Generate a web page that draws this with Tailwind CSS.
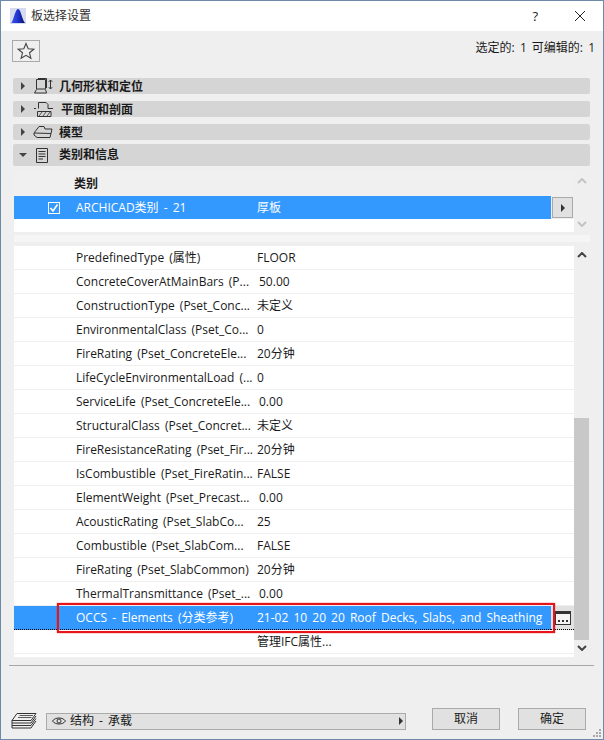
<!DOCTYPE html>
<html lang="en">
<head>
<meta charset="UTF-8">
<title>板选择设置</title>
<script src="https://cdn.jsdelivr.net/npm/@tailwindcss/browser@4"></script>
</head>
<body class="bg-[#efefef] font-['Open_Sans','Noto_Sans_CJK_SC',sans-serif] text-[12px] leading-[16px] text-[#1a1a1a] [word-spacing:2px]">
<div class="w-[604px] h-[740px] relative flex flex-col border border-[#6d8ba8] overflow-hidden">

  <!-- title bar -->
  <div class="h-[30px] bg-white flex items-center pl-[9px] shrink-0">
    <svg width="16" height="16" viewBox="0 0 16 16" class="mr-[5px]">
      <defs><linearGradient id="logo" x1="0" y1="0" x2="1" y2="0"><stop offset="0" stop-color="#3a56f0"/><stop offset=".6" stop-color="#1a2cc0"/><stop offset="1" stop-color="#0a1250"/></linearGradient></defs>
      <rect width="16" height="16" fill="#d5dcf2"/><path d="M1 15C3 15 5 1 8 1C11 1 12 12 15 15Z" fill="url(#logo)"/>
    </svg>
    <span class="text-[#333]">板选择设置</span>
    <span class="ml-auto mr-[36px] text-[13px]">?</span>
    <svg width="12" height="12" viewBox="0 0 12 12" class="mr-[17px]"><path d="M1 1L11 11M11 1L1 11" stroke="#222" stroke-width="1" fill="none"/></svg>
  </div>

  <!-- star + selection count -->
  <div class="h-[30px] mt-[9px] ml-[11px] mr-[8px] flex items-start shrink-0">
    <div class="w-[28px] h-[22px] border border-[#aaa] flex items-center justify-center">
      <svg width="18" height="18" viewBox="0 0 18 18"><path d="M9 1.5L11.2 6.8L16.8 7.2L12.5 10.8L13.9 16.3L9 13.3L4.1 16.3L5.5 10.8L1.2 7.2L6.8 6.8Z" fill="none" stroke="#444" stroke-width="1.1"/></svg>
    </div>
    <span class="ml-auto">选定的: 1 可编辑的: 1</span>
  </div>

  <!-- sections -->
  <div class="ml-[12px] w-[577px] mt-[8px] flex flex-col font-bold shrink-0">
    <div class="h-[16px] bg-[#d5d5d5] rounded-[2px] flex items-center pl-[8px]">
      <span class="w-0 h-0 border-y-[4px] border-y-transparent border-l-[4px] border-l-[#444]"></span>
      <svg width="20" height="16" viewBox="0 0 20 16" class="ml-[9px] mr-[5px]" fill="none" stroke="#333"><path d="M2.5 1.5H11.5V11H2.5Z M4 .5H12.5V10"/><path d="M2.5 11.5L.5 15H12.5L11.5 11.5"/><path d="M16.5 2V11M14.8 3.8L16.5 2L18.2 3.8M14.8 9.2L16.5 11L18.2 9.2"/></svg>
      <span class="mt-[2px]">几何形状和定位</span>
    </div>
    <div class="h-[16px] mt-[7px] bg-[#d5d5d5] rounded-[2px] flex items-center pl-[8px]">
      <span class="w-0 h-0 border-y-[4px] border-y-transparent border-l-[4px] border-l-[#444]"></span>
      <svg width="20" height="16" viewBox="0 0 20 16" class="ml-[9px] mr-[7px]" fill="none" stroke="#333"><path d="M0 7.5H2M4.5 7.5V1.5H12L14 3.5V7.5H19"/><path d="M3.5 10.5H17V15.5H3.5Z"/><path d="M5 15L8 11M9 15L12 11M13 15L16 11" stroke-width=".8"/></svg>
      <span class="mt-[2px]">平面图和剖面</span>
    </div>
    <div class="h-[16px] mt-[7px] bg-[#d5d5d5] rounded-[2px] flex items-center pl-[8px]">
      <span class="w-0 h-0 border-y-[4px] border-y-transparent border-l-[4px] border-l-[#444]"></span>
      <svg width="20" height="14" viewBox="0 0 20 14" class="ml-[8px] mr-[6px]" fill="none" stroke="#333"><path d="M1 8L6 1.5H11L12 4H19L18 8.5L1 8Z"/><path d="M1 8V10L4 12.5H17L18 8.5"/></svg>
      <span class="mt-[2px]">模型</span>
    </div>
    <div class="h-[22px] mt-[4px] bg-[#d5d5d5] rounded-[2px] flex items-center pl-[6px]">
      <span class="w-0 h-0 border-x-[4px] border-x-transparent border-t-[4px] border-t-[#444]"></span>
      <svg width="12" height="15" viewBox="0 0 12 15" class="ml-[9px] mr-[11px]" fill="none" stroke="#333"><path d="M.5.5H11.5V14.5H.5Z M2.5 3.5H9.5M2.5 6H9.5M2.5 8.5H9.5M2.5 11H7"/></svg>
      <span>类别和信息</span>
    </div>
  </div>

  <!-- classification table -->
  <div class="ml-[13px] mt-[6px] w-[576px] flex h-[60px] shrink-0">
    <div class="w-[560px] flex flex-col">
      <div class="h-[24px] bg-[#f0f0f0] pl-[60px] pt-[4px] font-bold">类别</div>
      <div class="flex h-[23px]">
        <div class="w-[537px] bg-[#3399ff] text-white flex items-center">
          <span class="ml-[34px] w-[12px] h-[12px] border border-white flex items-center justify-center">
            <svg width="10" height="10" viewBox="0 0 10 10" fill="none" stroke="white" stroke-width="1.6"><path d="M1.5 5L4 8L8.5 1.5"/></svg>
          </span>
          <span class="ml-[16px] w-[181px]">ARCHICAD类别 - 21</span>
          <span>厚板</span>
        </div>
        <div class="ml-[1px] w-[21px] h-[21px] mt-[1px] border border-[#aaa] bg-[#e1e1e1] flex items-center justify-center">
          <span class="w-0 h-0 border-y-[4px] border-y-transparent border-l-[4px] border-l-[#333]"></span>
        </div>
      </div>
      <div class="h-[13px] bg-white"></div>
    </div>
    <div class="w-[16px] flex flex-col items-center justify-between pt-[6px] pb-[5px]">
      <svg width="10" height="6" viewBox="0 0 10 6" fill="none" stroke="#c4c4c4" stroke-width="2"><path d="M1 5L5 1L9 5"/></svg>
      <svg width="10" height="6" viewBox="0 0 10 6" fill="none" stroke="#c4c4c4" stroke-width="2"><path d="M1 1L5 5L9 1"/></svg>
    </div>
  </div>
  <div class="ml-[13px] mt-[3px] w-[576px] h-[7px] bg-[#f5f5f5] shrink-0"></div>

  <!-- property list -->
  <div class="ml-[13px] mt-[4px] w-[576px] h-[411px] flex relative shrink-0 whitespace-nowrap">
    <div class="w-[560px] bg-white flex flex-col">
      <div class="h-[24px] flex items-center border-b border-[#efefef] pl-[62px]"><span class="w-[181px]">PredefinedType (属性)</span><span>FLOOR</span></div>
      <div class="h-[24px] flex items-center border-b border-[#efefef] pl-[62px]"><span class="w-[183px]">ConcreteCoverAtMainBars (P...</span><span>50.00</span></div>
      <div class="h-[24px] flex items-center border-b border-[#efefef] pl-[62px]"><span class="w-[181px]">ConstructionType (Pset_Conc...</span><span>未定义</span></div>
      <div class="h-[24px] flex items-center border-b border-[#efefef] pl-[62px]"><span class="w-[181px]">EnvironmentalClass (Pset_Co...</span><span>0</span></div>
      <div class="h-[24px] flex items-center border-b border-[#efefef] pl-[62px]"><span class="w-[181px]">FireRating (Pset_ConcreteEle...</span><span>20分钟</span></div>
      <div class="h-[24px] flex items-center border-b border-[#efefef] pl-[62px]"><span class="w-[181px]">LifeCycleEnvironmentalLoad (...</span><span>0</span></div>
      <div class="h-[24px] flex items-center border-b border-[#efefef] pl-[62px]"><span class="w-[183px]">ServiceLife (Pset_ConcreteEle...</span><span>0.00</span></div>
      <div class="h-[24px] flex items-center border-b border-[#efefef] pl-[62px]"><span class="w-[181px]">StructuralClass (Pset_Concret...</span><span>未定义</span></div>
      <div class="h-[24px] flex items-center border-b border-[#efefef] pl-[62px]"><span class="w-[181px]">FireResistanceRating (Pset_Fir...</span><span>20分钟</span></div>
      <div class="h-[24px] flex items-center border-b border-[#efefef] pl-[62px]"><span class="w-[181px]">IsCombustible (Pset_FireRatin...</span><span>FALSE</span></div>
      <div class="h-[24px] flex items-center border-b border-[#efefef] pl-[62px]"><span class="w-[183px]">ElementWeight (Pset_Precast...</span><span>0.00</span></div>
      <div class="h-[24px] flex items-center border-b border-[#efefef] pl-[62px]"><span class="w-[181px]">AcousticRating (Pset_SlabCo...</span><span>25</span></div>
      <div class="h-[24px] flex items-center border-b border-[#efefef] pl-[62px]"><span class="w-[181px]">Combustible (Pset_SlabCom...</span><span>FALSE</span></div>
      <div class="h-[24px] flex items-center border-b border-[#efefef] pl-[62px]"><span class="w-[181px]">FireRating (Pset_SlabCommon)</span><span>20分钟</span></div>
      <div class="h-[24px] flex items-center border-b border-[#efefef] pl-[62px]"><span class="w-[183px]">ThermalTransmittance (Pset_...</span><span>0.00</span></div>
      <div class="h-[24px] flex">
        <div class="w-[537px] bg-[#3399ff] text-white flex items-center pl-[62px] border-b border-dotted border-black">
          <span class="w-[181px]">OCCS - Elements (分类参考)</span><span>21-02 10 20 20 Roof Decks, Slabs, and Sheathing</span>
        </div>
        <div class="w-[23px] bg-[#e1e1e1] flex items-center justify-center border-b border-dotted border-black">
          <svg width="16" height="14" viewBox="0 0 16 14"><rect x=".5" y=".5" width="15" height="13" fill="#f4f4f4" stroke="#333"/><rect x="0" y="0" width="16" height="3" fill="#333"/><path d="M3 9h2v2H3zM7 9h2v2H7zM11 9h2v2h-2z" fill="#333"/></svg>
        </div>
      </div>
      <div class="h-[24px] flex items-center border-b border-[#efefef] pl-[243px]">管理IFC属性...</div>
    </div>
    <!-- scrollbar -->
    <div class="w-[16px] flex flex-col items-center relative">
      <svg width="10" height="6" viewBox="0 0 10 6" fill="none" stroke="#444" stroke-width="2" class="mt-[6px]"><path d="M1 5L5 1L9 5"/></svg>
      <div class="absolute left-0 top-[172px] w-[15px] h-[222px] bg-[#c8c8c8]"></div>
      <svg width="10" height="6" viewBox="0 0 10 6" fill="none" stroke="#444" stroke-width="2" class="mt-auto mb-[6px]"><path d="M1 1L5 5L9 1"/></svg>
    </div>
    <!-- red highlight -->
    <div class="absolute left-[43px] top-[357px] w-[498px] h-[30px] border-2 border-[#e8141c] shadow-[0_0_1px_#e8141c]"></div>
  </div>

  <div class="ml-[8px] mt-[8px] w-[585px] h-[1px] bg-[#a8a8a8] shrink-0"></div>

  <!-- footer -->
  <div class="mt-[42px] ml-[10px] flex items-center shrink-0">
    <svg width="26" height="16" viewBox="0 0 26 16" fill="none" stroke="#333" class="mt-[4px]"><path d="M6 .5H25L20 7.5H1Z"/><path d="M8.5 2.5H22M7 4.5H20.5" stroke-width=".8"/><path d="M1 7.5V10H20L25 3M1 10V12.5H20L25 5.5M1 12.5V15H20L25 8"/></svg>
    <div class="ml-[9px] mt-[4px] w-[360px] h-[17px] border border-[#aaa] bg-[#e1e1e1] flex items-center pl-[5px]">
      <svg width="14" height="10" viewBox="0 0 14 10" fill="none" stroke="#333" class="mr-[4px]"><path d="M.5 5C3 1 11 1 13.5 5C11 9 3 9 .5 5Z"/><circle cx="7" cy="5" r="2"/></svg>
      <span>结构 - 承载</span>
      <span class="ml-auto mr-[2px] w-0 h-0 border-y-[4px] border-y-transparent border-l-[4px] border-l-[#333]"></span>
    </div>
    <div class="ml-[26px] w-[68px] h-[22px] border border-[#aaa] bg-[#e1e1e1] flex items-center justify-center">取消</div>
    <div class="ml-[18px] w-[68px] h-[22px] border border-[#aaa] bg-[#e1e1e1] flex items-center justify-center">确定</div>
  </div>

  <!-- resize grip -->
  <svg width="8" height="8" viewBox="0 0 8 8" fill="#a8a8a8" class="absolute right-[2px] bottom-[2px]"><path d="M6 0h2v2H6zM3 3h2v2H3zM6 3h2v2H6zM0 6h2v2H0zM3 6h2v2H3zM6 6h2v2H6z"/></svg>
</div>
</body>
</html>
